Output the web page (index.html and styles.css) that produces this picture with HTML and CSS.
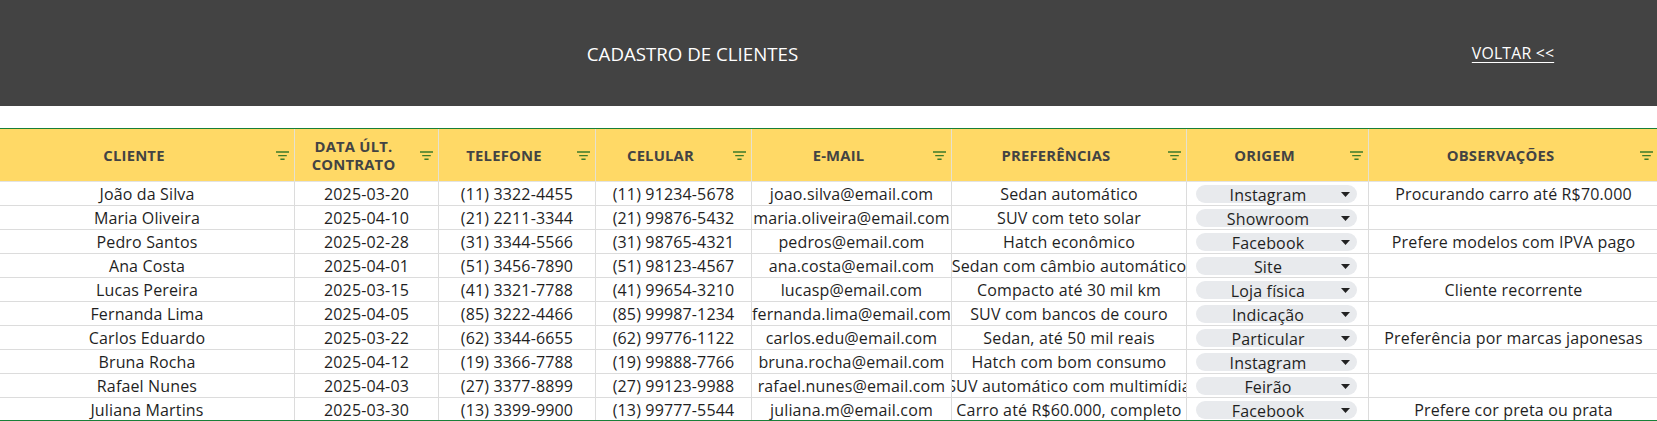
FILE: index.html
```html
<!DOCTYPE html>
<html lang="pt-BR">
<head>
<meta charset="utf-8">
<title>Cadastro de Clientes</title>
<link rel="stylesheet" href="styles.css">
</head>
<body>
<div class="page">
  <header class="topbar">
    <div class="title">CADASTRO DE CLIENTES</div>
    <div class="back"><a href="#" class="back-link">VOLTAR &lt;&lt;</a></div>
  </header>
  <div class="spacer"></div>
  <section class="sheet">
    <div class="grid">
      <div class="hcell"><span class="hlabel">CLIENTE</span><svg class="filter" viewBox="0 0 13 9" width="13" height="9"><path d="M0 1h13M2.2 4.6h8.6M4.4 8.2h4.2"/></svg></div>
      <div class="hcell"><span class="hlabel">DATA ÚLT.<br>CONTRATO</span><svg class="filter" viewBox="0 0 13 9" width="13" height="9"><path d="M0 1h13M2.2 4.6h8.6M4.4 8.2h4.2"/></svg></div>
      <div class="hcell"><span class="hlabel">TELEFONE</span><svg class="filter" viewBox="0 0 13 9" width="13" height="9"><path d="M0 1h13M2.2 4.6h8.6M4.4 8.2h4.2"/></svg></div>
      <div class="hcell"><span class="hlabel">CELULAR</span><svg class="filter" viewBox="0 0 13 9" width="13" height="9"><path d="M0 1h13M2.2 4.6h8.6M4.4 8.2h4.2"/></svg></div>
      <div class="hcell"><span class="hlabel">E-MAIL</span><svg class="filter" viewBox="0 0 13 9" width="13" height="9"><path d="M0 1h13M2.2 4.6h8.6M4.4 8.2h4.2"/></svg></div>
      <div class="hcell"><span class="hlabel">PREFERÊNCIAS</span><svg class="filter" viewBox="0 0 13 9" width="13" height="9"><path d="M0 1h13M2.2 4.6h8.6M4.4 8.2h4.2"/></svg></div>
      <div class="hcell"><span class="hlabel">ORIGEM</span><svg class="filter" viewBox="0 0 13 9" width="13" height="9"><path d="M0 1h13M2.2 4.6h8.6M4.4 8.2h4.2"/></svg></div>
      <div class="hcell"><span class="hlabel">OBSERVAÇÕES</span><svg class="filter" viewBox="0 0 13 9" width="13" height="9"><path d="M0 1h13M2.2 4.6h8.6M4.4 8.2h4.2"/></svg></div>

      <div class="cell"><span class="val">João da Silva</span></div>
      <div class="cell"><span class="val">2025-03-20</span></div>
      <div class="cell"><span class="val">(11) 3322-4455</span></div>
      <div class="cell"><span class="val">(11) 91234-5678</span></div>
      <div class="cell"><span class="val">joao.silva@email.com</span></div>
      <div class="cell"><span class="val">Sedan automático</span></div>
      <div class="cell chipcell"><div class="chip"><span class="chip-text">Instagram</span><svg class="caret" viewBox="0 0 9 5" width="9" height="5"><path d="M0 0h9L4.5 5z"/></svg></div></div>
      <div class="cell"><span class="val">Procurando carro até R$70.000</span></div>

      <div class="cell"><span class="val">Maria Oliveira</span></div>
      <div class="cell"><span class="val">2025-04-10</span></div>
      <div class="cell"><span class="val">(21) 2211-3344</span></div>
      <div class="cell"><span class="val">(21) 99876-5432</span></div>
      <div class="cell"><span class="val">maria.oliveira@email.com</span></div>
      <div class="cell"><span class="val">SUV com teto solar</span></div>
      <div class="cell chipcell"><div class="chip"><span class="chip-text">Showroom</span><svg class="caret" viewBox="0 0 9 5" width="9" height="5"><path d="M0 0h9L4.5 5z"/></svg></div></div>
      <div class="cell"></div>

      <div class="cell"><span class="val">Pedro Santos</span></div>
      <div class="cell"><span class="val">2025-02-28</span></div>
      <div class="cell"><span class="val">(31) 3344-5566</span></div>
      <div class="cell"><span class="val">(31) 98765-4321</span></div>
      <div class="cell"><span class="val">pedros@email.com</span></div>
      <div class="cell"><span class="val">Hatch econômico</span></div>
      <div class="cell chipcell"><div class="chip"><span class="chip-text">Facebook</span><svg class="caret" viewBox="0 0 9 5" width="9" height="5"><path d="M0 0h9L4.5 5z"/></svg></div></div>
      <div class="cell"><span class="val">Prefere modelos com IPVA pago</span></div>

      <div class="cell"><span class="val">Ana Costa</span></div>
      <div class="cell"><span class="val">2025-04-01</span></div>
      <div class="cell"><span class="val">(51) 3456-7890</span></div>
      <div class="cell"><span class="val">(51) 98123-4567</span></div>
      <div class="cell"><span class="val">ana.costa@email.com</span></div>
      <div class="cell"><span class="val">Sedan com câmbio automático</span></div>
      <div class="cell chipcell"><div class="chip"><span class="chip-text">Site</span><svg class="caret" viewBox="0 0 9 5" width="9" height="5"><path d="M0 0h9L4.5 5z"/></svg></div></div>
      <div class="cell"></div>

      <div class="cell"><span class="val">Lucas Pereira</span></div>
      <div class="cell"><span class="val">2025-03-15</span></div>
      <div class="cell"><span class="val">(41) 3321-7788</span></div>
      <div class="cell"><span class="val">(41) 99654-3210</span></div>
      <div class="cell"><span class="val">lucasp@email.com</span></div>
      <div class="cell"><span class="val">Compacto até 30 mil km</span></div>
      <div class="cell chipcell"><div class="chip"><span class="chip-text">Loja física</span><svg class="caret" viewBox="0 0 9 5" width="9" height="5"><path d="M0 0h9L4.5 5z"/></svg></div></div>
      <div class="cell"><span class="val">Cliente recorrente</span></div>

      <div class="cell"><span class="val">Fernanda Lima</span></div>
      <div class="cell"><span class="val">2025-04-05</span></div>
      <div class="cell"><span class="val">(85) 3222-4466</span></div>
      <div class="cell"><span class="val">(85) 99987-1234</span></div>
      <div class="cell"><span class="val">fernanda.lima@email.com</span></div>
      <div class="cell"><span class="val">SUV com bancos de couro</span></div>
      <div class="cell chipcell"><div class="chip"><span class="chip-text">Indicação</span><svg class="caret" viewBox="0 0 9 5" width="9" height="5"><path d="M0 0h9L4.5 5z"/></svg></div></div>
      <div class="cell"></div>

      <div class="cell"><span class="val">Carlos Eduardo</span></div>
      <div class="cell"><span class="val">2025-03-22</span></div>
      <div class="cell"><span class="val">(62) 3344-6655</span></div>
      <div class="cell"><span class="val">(62) 99776-1122</span></div>
      <div class="cell"><span class="val">carlos.edu@email.com</span></div>
      <div class="cell"><span class="val">Sedan, até 50 mil reais</span></div>
      <div class="cell chipcell"><div class="chip"><span class="chip-text">Particular</span><svg class="caret" viewBox="0 0 9 5" width="9" height="5"><path d="M0 0h9L4.5 5z"/></svg></div></div>
      <div class="cell"><span class="val">Preferência por marcas japonesas</span></div>

      <div class="cell"><span class="val">Bruna Rocha</span></div>
      <div class="cell"><span class="val">2025-04-12</span></div>
      <div class="cell"><span class="val">(19) 3366-7788</span></div>
      <div class="cell"><span class="val">(19) 99888-7766</span></div>
      <div class="cell"><span class="val">bruna.rocha@email.com</span></div>
      <div class="cell"><span class="val">Hatch com bom consumo</span></div>
      <div class="cell chipcell"><div class="chip"><span class="chip-text">Instagram</span><svg class="caret" viewBox="0 0 9 5" width="9" height="5"><path d="M0 0h9L4.5 5z"/></svg></div></div>
      <div class="cell"></div>

      <div class="cell"><span class="val">Rafael Nunes</span></div>
      <div class="cell"><span class="val">2025-04-03</span></div>
      <div class="cell"><span class="val">(27) 3377-8899</span></div>
      <div class="cell"><span class="val">(27) 99123-9988</span></div>
      <div class="cell"><span class="val">rafael.nunes@email.com</span></div>
      <div class="cell"><span class="val">SUV automático com multimídia</span></div>
      <div class="cell chipcell"><div class="chip"><span class="chip-text">Feirão</span><svg class="caret" viewBox="0 0 9 5" width="9" height="5"><path d="M0 0h9L4.5 5z"/></svg></div></div>
      <div class="cell"></div>

      <div class="cell"><span class="val">Juliana Martins</span></div>
      <div class="cell"><span class="val">2025-03-30</span></div>
      <div class="cell"><span class="val">(13) 3399-9900</span></div>
      <div class="cell"><span class="val">(13) 99777-5544</span></div>
      <div class="cell"><span class="val">juliana.m@email.com</span></div>
      <div class="cell"><span class="val">Carro até R$60.000, completo</span></div>
      <div class="cell chipcell"><div class="chip"><span class="chip-text">Facebook</span><svg class="caret" viewBox="0 0 9 5" width="9" height="5"><path d="M0 0h9L4.5 5z"/></svg></div></div>
      <div class="cell"><span class="val">Prefere cor preta ou prata</span></div>
    </div>
  </section>
</div>
</body>
</html>
```

FILE: styles.css
```css
* {
  box-sizing: border-box;
}

html, body {
  margin: 0;
  padding: 0;
  background: #ffffff;
}

body {
  width: 1657px;
  height: 421px;
  overflow: hidden;
  font-family: "Open Sans", "Liberation Sans", sans-serif;
}

.page {
  display: flex;
  flex-direction: column;
  height: 421px;
}

.topbar {
  flex: 0 0 106px;
  background: #434343;
  display: grid;
  grid-template-columns: 1385px 256px;
  align-items: center;
  color: #ffffff;
}

.title {
  text-align: center;
  font-size: 18.7px;
  font-weight: 400;
}

.back {
  text-align: center;
}

.back-link {
  color: #ffffff;
  font-size: 15.8px;
  letter-spacing: 0.2px;
  text-decoration: underline;
  text-underline-offset: 3px;
  text-decoration-thickness: 1px;
}

.spacer {
  flex: 0 0 22px;
}

.sheet {
  flex: 1 1 auto;
  overflow: hidden;
  border-top: 1px solid #188038;
  border-bottom: 1px solid #188038;
}

.grid {
  display: grid;
  grid-template-columns: 295px 144px 157px 156px 200px 235px 182px 290px;
  grid-template-rows: 53px;
  grid-auto-rows: 24px;
  width: 1659px;
}

.hcell {
  background: #ffd966;
  border-right: 1px solid #e6e1cf;
  border-bottom: 1px solid #e3e3e3;
  display: flex;
  align-items: center;
  padding-right: 5px;
  color: #434343;
  font-weight: 700;
  font-size: 14.8px;
  letter-spacing: 0.2px;
  line-height: 17.3px;
}

.hlabel {
  flex: 1 1 auto;
  text-align: center;
  padding-top: 1px;
}

.filter {
  flex: 0 0 13px;
  margin-left: 8px;
  margin-top: 1px;
}

.filter path {
  stroke: #3d7a2a;
  stroke-width: 1.4;
  fill: none;
}

.cell {
  border-right: 1px solid #dcdcdc;
  border-bottom: 1px solid #dcdcdc;
  display: flex;
  justify-content: center;
  align-items: center;
  overflow: hidden;
  white-space: nowrap;
  font-size: 16px;
  letter-spacing: 0.15px;
  color: #1f1f1f;
  line-height: 20px;
}

.val {
  flex: 0 0 auto;
  padding-top: 1px;
}

.chipcell {
  justify-content: flex-start;
  padding: 0 11px 0 9px;
}

.chip {
  flex: 1 1 auto;
  height: 18px;
  border-radius: 9px;
  background: #e8eaed;
  display: flex;
  align-items: center;
  padding: 0 7px 0 0;
  margin-top: 1px;
}

.chip-text {
  flex: 1 1 auto;
  text-align: center;
  padding-left: 7px;
  padding-right: 8px;
  line-height: 18px;
  padding-top: 1px;
}

.caret {
  flex: 0 0 9px;
}

.caret path {
  fill: #222222;
}
```
